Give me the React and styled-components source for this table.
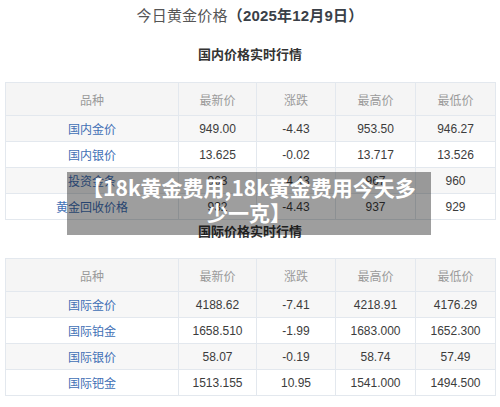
import React from 'react';
import styled, { createGlobalStyle } from 'styled-components';

const GlobalStyle = createGlobalStyle`
  html, body {
    margin: 0;
    padding: 0;
    background: #fff;
  }
  body {
    font-family: 'Liberation Sans', 'Noto Sans CJK SC', sans-serif;
  }
`;

const Page = styled.div`
  position: relative;
  width: 500px;
  height: 407px;
  overflow: hidden;
  background: #fff;
`;

const Title = styled.h1`
  margin: 0;
  padding-top: 6px;
  font-size: 15px;
  line-height: 20px;
  font-weight: normal;
  text-align: center;
  color: #555;
  letter-spacing: 0.2px;

  b {
    font-weight: bold;
    color: #3a3f47;
  }
`;

const SubTitle = styled.h2`
  margin: ${(p) => p.$top}px 0 0;
  font-size: 13px;
  line-height: 20px;
  font-weight: bold;
  text-align: center;
  color: #333;
`;

const PriceTable = styled.table`
  margin: ${(p) => p.$top}px 0 0 5px;
  width: 490px;
  table-layout: fixed;
  border-collapse: collapse;
  font-size: 12px;
  color: #3c3c3c;

  th, td {
    border: 1px solid #e3e8ee;
    text-align: center;
    padding: 0;
  }

  th {
    height: 32px;
    background: #f5f5f5;
    color: #9a9a9a;
    font-weight: normal;
  }

  td {
    height: 25px;
  }

  tbody tr:nth-child(odd) td {
    background: #f7f7f7;
  }
`;

const NameLink = styled.a`
  color: #3f6fb5;
  text-decoration: none;
`;

const Banner = styled.div`
  position: absolute;
  left: 67px;
  top: 172px;
  width: 364px;
  height: 63px;
  box-sizing: border-box;
  padding: 3px 12px 0;
  background: rgba(0, 0, 0, 0.38);
  color: #fff;
  font-family: 'Noto Sans CJK SC', sans-serif;
  font-size: 21px;
  font-weight: bold;
  line-height: 25px;
  text-align: center;
`;

const domestic = [
  ['国内金价', '949.00', '-4.43', '953.50', '946.27'],
  ['国内银价', '13.625', '-0.02', '13.717', '13.526'],
  ['投资金条', '963', '-4.43', '967', '960'],
  ['黄金回收价格', '932', '-4.43', '937', '929'],
];

const international = [
  ['国际金价', '4188.62', '-7.41', '4218.91', '4176.29'],
  ['国际铂金', '1658.510', '-1.99', '1683.000', '1652.300'],
  ['国际银价', '58.07', '-0.19', '58.74', '57.49'],
  ['国际钯金', '1513.155', '10.95', '1541.000', '1494.500'],
];

const widths = [173, 78, 79, 80, 80];

function Table({ rows, top }) {
  return (
    <PriceTable $top={top}>
      <colgroup>
        {widths.map((w, i) => (
          <col key={i} style={{ width: w }} />
        ))}
      </colgroup>
      <thead>
        <tr>
          <th>品种</th>
          <th>最新价</th>
          <th>涨跌</th>
          <th>最高价</th>
          <th>最低价</th>
        </tr>
      </thead>
      <tbody>
        {rows.map((r) => (
          <tr key={r[0]}>
            <td>
              <NameLink href="#">{r[0]}</NameLink>
            </td>
            <td>{r[1]}</td>
            <td>{r[2]}</td>
            <td>{r[3]}</td>
            <td>{r[4]}</td>
          </tr>
        ))}
      </tbody>
    </PriceTable>
  );
}

export default function App() {
  return (
    <Page>
      <GlobalStyle />
      <Title>
        今日黄金价格<b>（2025年12月9日）</b>
      </Title>
      <SubTitle $top={19}>国内价格实时行情</SubTitle>
      <Table rows={domestic} top={17} />
      <SubTitle $top={2}>国际价格实时行情</SubTitle>
      <Table rows={international} top={16} />
      <Banner>【18k黄金费用,18k黄金费用今天多少一克】</Banner>
    </Page>
  );
}
